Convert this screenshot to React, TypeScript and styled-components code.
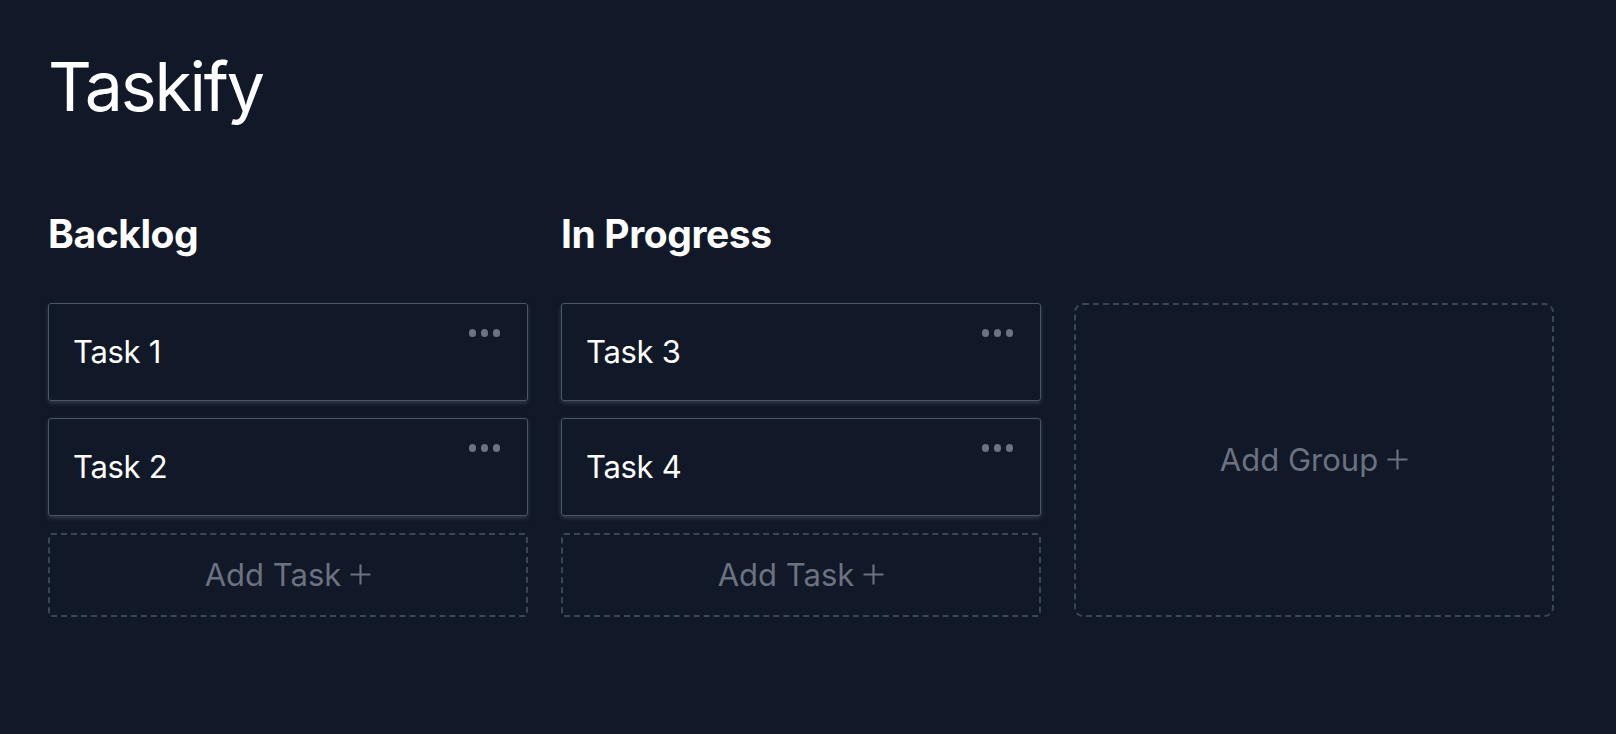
import * as React from "react";
import styled, { createGlobalStyle } from "styled-components";

const GlobalStyle = createGlobalStyle`
  html, body {
    margin: 0;
    padding: 0;
    background: #111827;
  }
  body {
    font-family: Inter, "Noto Sans", sans-serif;
    color: #ffffff;
  }
`;

//Board layout
const Page = styled.div`
  min-height: 734px;
  padding: 44px 48px 0 48px;
  box-sizing: border-box;
  background: #111827;
`;

const Title = styled.h1`
  margin: 0;
  font-size: 68px;
  font-weight: 400;
  line-height: 84px;
  letter-spacing: -2.2px;
`;

const Board = styled.div`
  display: grid;
  grid-template-columns: repeat(3, 480px);
  column-gap: 33px;
  margin-top: 80px;
`;

const Column = styled.div`
  display: flex;
  flex-direction: column;
`;

const ColumnTitle = styled.h2`
  margin: 0 0 43px 0;
  font-size: 39px;
  font-weight: 700;
  line-height: 52px;
  letter-spacing: -0.4px;
  height: 52px;
`;

const TaskList = styled.div`
  display: flex;
  flex-direction: column;
  gap: 17px;
`;

const TaskCard = styled.div`
  position: relative;
  display: flex;
  align-items: center;
  height: 98px;
  box-sizing: border-box;
  padding: 0 24px;
  border: 1.5px solid #4b5563;
  border-radius: 3px;
  background: #111827;
  box-shadow: 0 2px 4px rgba(75, 85, 99, 0.6);
  font-size: 31px;
  line-height: 48px;
  letter-spacing: -0.3px;
`;

const Dots = styled.div`
  position: absolute;
  top: 25px;
  right: 27px;
  display: flex;
  gap: 4.5px;
`;

const Dot = styled.span`
  width: 7.5px;
  height: 7.5px;
  border-radius: 50%;
  background: #6b7280;
`;

const DashedButton = styled.div<{ $tall?: boolean }>`
  display: flex;
  align-items: center;
  justify-content: center;
  box-sizing: border-box;
  height: ${(p) => (p.$tall ? "auto" : "84px")};
  flex: ${(p) => (p.$tall ? "1" : "none")};
  border: 2px dashed #3c4554;
  border-radius: ${(p) => (p.$tall ? "9px" : "3px")};
  color: #6b7280;
  font-size: 31px;
  line-height: 48px;
  cursor: pointer;
`;

const PlusIcon = styled.svg`
  width: 21px;
  height: 21px;
  margin-left: 9px;
  margin-top: -1px;
`;

const Plus = () => (
  <PlusIcon viewBox="0 0 21 21">
    <path d="M10.5 0.5v20M0.5 10.5h20" stroke="#6b7280" strokeWidth="2.1" fill="none" />
  </PlusIcon>
);

type Group = { name: string; tasks: string[] };

const groups: Group[] = [
  { name: "Backlog", tasks: ["Task 1", "Task 2"] },
  { name: "In Progress", tasks: ["Task 3", "Task 4"] },
];

class App extends React.Component<any, any> {
  render(): React.ReactNode {
    return (
      <Page>
        <GlobalStyle />
        <Title>Taskify</Title>
        <Board>
          {groups.map((group) => (
            <Column key={group.name}>
              <ColumnTitle>{group.name}</ColumnTitle>
              <TaskList>
                {group.tasks.map((task) => (
                  <TaskCard key={task}>
                    {task}
                    <Dots>
                      <Dot />
                      <Dot />
                      <Dot />
                    </Dots>
                  </TaskCard>
                ))}
                <DashedButton>
                  Add Task
                  <Plus />
                </DashedButton>
              </TaskList>
            </Column>
          ))}
          <Column>
            <ColumnTitle />
            <DashedButton $tall>
              Add Group
              <Plus />
            </DashedButton>
          </Column>
        </Board>
      </Page>
    );
  }
}

export default App;
